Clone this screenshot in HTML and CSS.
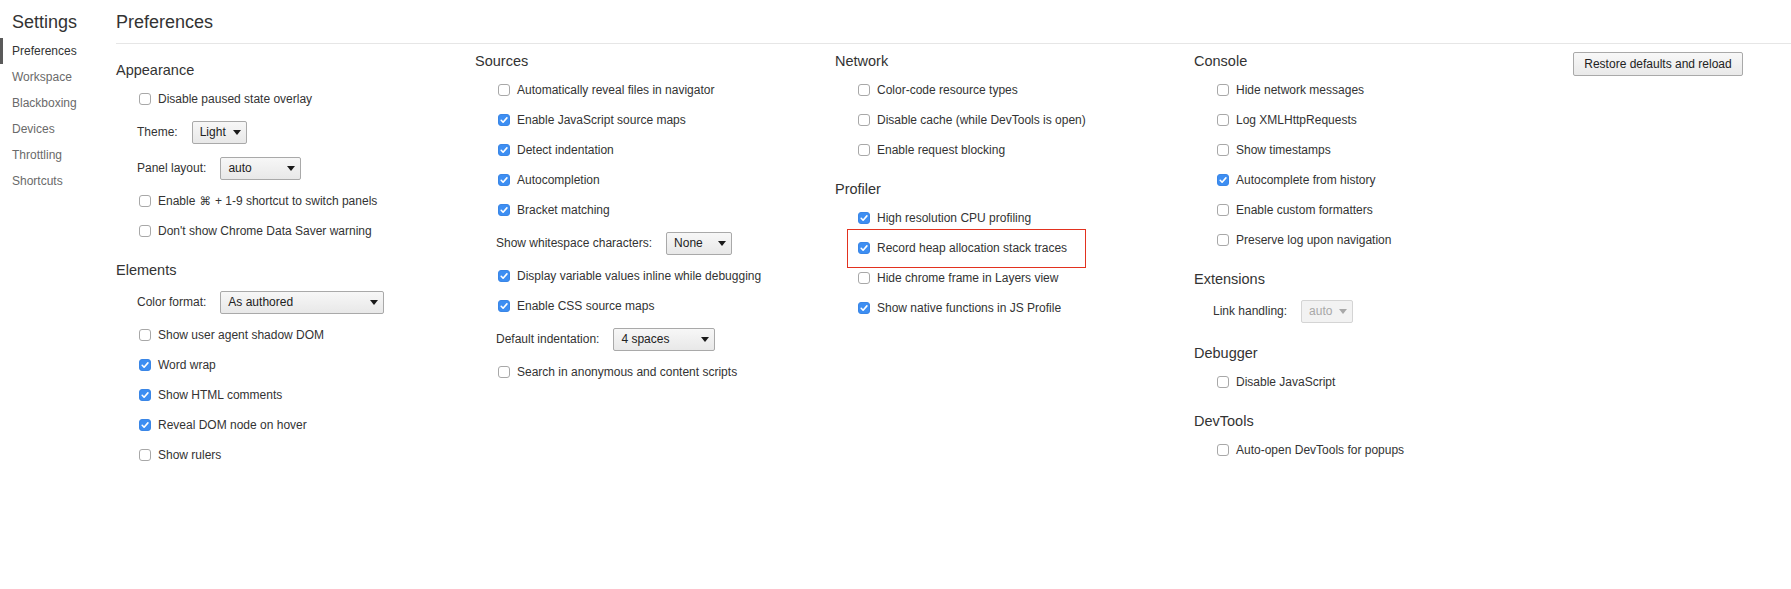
FILE: index.html
```html
<!DOCTYPE html>
<html>
<head>
<meta charset="utf-8">
<title>Settings</title>
<link rel="stylesheet" href="styles.css">
</head>
<body>
<div class="app">
  <aside class="sidebar">
    <div class="sidebar-title">Settings</div>
    <nav class="nav">
      <div class="nav-item active">Preferences</div>
      <div class="nav-item">Workspace</div>
      <div class="nav-item">Blackboxing</div>
      <div class="nav-item">Devices</div>
      <div class="nav-item">Throttling</div>
      <div class="nav-item">Shortcuts</div>
    </nav>
  </aside>
  <main class="main">
    <header class="main-title">Preferences</header>
    <div class="content">
      <div class="columns">
        <div class="column first">
          <section class="section">
            <h2 class="section-title">Appearance</h2>
            <label class="row"><span class="cb"></span>Disable paused state overlay</label>
            <div class="row select-row"><span class="select-label">Theme:</span><span class="select w-theme"><span>Light</span><i class="arrow"></i></span></div>
            <div class="row select-row"><span class="select-label">Panel layout:</span><span class="select w-panel"><span>auto</span><i class="arrow"></i></span></div>
            <label class="row"><span class="cb"></span>Enable <span class="cmd">⌘</span> + 1-9 shortcut to switch panels</label>
            <label class="row"><span class="cb"></span>Don't show Chrome Data Saver warning</label>
          </section>
          <section class="section">
            <h2 class="section-title">Elements</h2>
            <div class="row select-row"><span class="select-label">Color format:</span><span class="select w-color"><span>As authored</span><i class="arrow"></i></span></div>
            <label class="row"><span class="cb"></span>Show user agent shadow DOM</label>
            <label class="row"><span class="cb checked"><svg viewBox="0 0 12 12"><path d="M3.2 6.3 L5.1 8.2 L8.9 3.9"/></svg></span>Word wrap</label>
            <label class="row"><span class="cb checked"><svg viewBox="0 0 12 12"><path d="M3.2 6.3 L5.1 8.2 L8.9 3.9"/></svg></span>Show HTML comments</label>
            <label class="row"><span class="cb checked"><svg viewBox="0 0 12 12"><path d="M3.2 6.3 L5.1 8.2 L8.9 3.9"/></svg></span>Reveal DOM node on hover</label>
            <label class="row"><span class="cb"></span>Show rulers</label>
          </section>
        </div>
        <div class="column">
          <section class="section">
            <h2 class="section-title">Sources</h2>
            <label class="row"><span class="cb"></span>Automatically reveal files in navigator</label>
            <label class="row"><span class="cb checked"><svg viewBox="0 0 12 12"><path d="M3.2 6.3 L5.1 8.2 L8.9 3.9"/></svg></span>Enable JavaScript source maps</label>
            <label class="row"><span class="cb checked"><svg viewBox="0 0 12 12"><path d="M3.2 6.3 L5.1 8.2 L8.9 3.9"/></svg></span>Detect indentation</label>
            <label class="row"><span class="cb checked"><svg viewBox="0 0 12 12"><path d="M3.2 6.3 L5.1 8.2 L8.9 3.9"/></svg></span>Autocompletion</label>
            <label class="row"><span class="cb checked"><svg viewBox="0 0 12 12"><path d="M3.2 6.3 L5.1 8.2 L8.9 3.9"/></svg></span>Bracket matching</label>
            <div class="row select-row"><span class="select-label">Show whitespace characters:</span><span class="select w-ws"><span>None</span><i class="arrow"></i></span></div>
            <label class="row"><span class="cb checked"><svg viewBox="0 0 12 12"><path d="M3.2 6.3 L5.1 8.2 L8.9 3.9"/></svg></span>Display variable values inline while debugging</label>
            <label class="row"><span class="cb checked"><svg viewBox="0 0 12 12"><path d="M3.2 6.3 L5.1 8.2 L8.9 3.9"/></svg></span>Enable CSS source maps</label>
            <div class="row select-row"><span class="select-label">Default indentation:</span><span class="select w-indent"><span>4 spaces</span><i class="arrow"></i></span></div>
            <label class="row"><span class="cb"></span>Search in anonymous and content scripts</label>
          </section>
        </div>
        <div class="column">
          <section class="section">
            <h2 class="section-title">Network</h2>
            <label class="row"><span class="cb"></span>Color-code resource types</label>
            <label class="row"><span class="cb"></span>Disable cache (while DevTools is open)</label>
            <label class="row"><span class="cb"></span>Enable request blocking</label>
          </section>
          <section class="section">
            <h2 class="section-title">Profiler</h2>
            <label class="row"><span class="cb checked"><svg viewBox="0 0 12 12"><path d="M3.2 6.3 L5.1 8.2 L8.9 3.9"/></svg></span>High resolution CPU profiling</label>
            <label class="row highlight"><span class="cb checked"><svg viewBox="0 0 12 12"><path d="M3.2 6.3 L5.1 8.2 L8.9 3.9"/></svg></span>Record heap allocation stack traces</label>
            <label class="row"><span class="cb"></span>Hide chrome frame in Layers view</label>
            <label class="row"><span class="cb checked"><svg viewBox="0 0 12 12"><path d="M3.2 6.3 L5.1 8.2 L8.9 3.9"/></svg></span>Show native functions in JS Profile</label>
          </section>
        </div>
        <div class="column">
          <section class="section">
            <h2 class="section-title">Console</h2>
            <label class="row"><span class="cb"></span>Hide network messages</label>
            <label class="row"><span class="cb"></span>Log XMLHttpRequests</label>
            <label class="row"><span class="cb"></span>Show timestamps</label>
            <label class="row"><span class="cb checked"><svg viewBox="0 0 12 12"><path d="M3.2 6.3 L5.1 8.2 L8.9 3.9"/></svg></span>Autocomplete from history</label>
            <label class="row"><span class="cb"></span>Enable custom formatters</label>
            <label class="row"><span class="cb"></span>Preserve log upon navigation</label>
          </section>
          <section class="section">
            <h2 class="section-title">Extensions</h2>
            <div class="row select-row link-row"><span class="select-label">Link handling:</span><span class="select w-link disabled"><span>auto</span><i class="arrow"></i></span></div>
          </section>
          <section class="section">
            <h2 class="section-title">Debugger</h2>
            <label class="row"><span class="cb"></span>Disable JavaScript</label>
          </section>
          <section class="section">
            <h2 class="section-title">DevTools</h2>
            <label class="row"><span class="cb"></span>Auto-open DevTools for popups</label>
          </section>
        </div>
      </div>
      <div class="actions">
        <button class="btn">Restore defaults and reload</button>
      </div>
    </div>
  </main>
</div>
</body>
</html>
```

FILE: styles.css
```css
* { box-sizing: border-box; }

html, body {
  margin: 0;
  padding: 0;
  background: #ffffff;
}

body {
  font-family: "Liberation Sans", Arial, Helvetica, sans-serif;
  font-size: 12px;
  color: #333333;
}

.app {
  display: flex;
  min-height: 589px;
}

/* Sidebar */
.sidebar {
  width: 116px;
  flex: 0 0 116px;
}

.sidebar-title {
  padding: 10px 0 0 12px;
  font-size: 18px;
  line-height: 24px;
  color: #333333;
}

.nav {
  margin-top: 4px;
}

.nav-item {
  height: 26px;
  line-height: 26px;
  padding-left: 12px;
  color: #6a6a6a;
}

.nav-item.active {
  color: #333333;
  box-shadow: inset 3px 0 0 #5a5a5a;
}

/* Main */
.main {
  flex: 1;
  min-width: 0;
}

.main-title {
  height: 44px;
  padding-top: 10px;
  font-size: 18px;
  line-height: 24px;
  border-bottom: 1px solid #e6e6e6;
  color: #333333;
}

.content {
  display: flex;
  align-items: flex-start;
  padding-top: 7px;
}

.columns {
  display: grid;
  grid-template-columns: 359px 360px 359px 360px;
}

.column.first {
  padding-top: 9px;
}

.section + .section {
  margin-top: 14px;
}

.section-title {
  margin: 0 0 4px 0;
  font-size: 14.5px;
  font-weight: normal;
  line-height: 20px;
  color: #333333;
}

.row {
  display: flex;
  align-items: center;
  height: 30px;
  padding-left: 23px;
  white-space: nowrap;
}

.select-row {
  height: 36px;
  padding-left: 21px;
}

.link-row {
  padding-left: 19px;
}

.select-label {
  margin-right: 14px;
}

.cmd {
  font-family: "DejaVu Sans", sans-serif;
  font-size: 11.5px;
  margin: 0 4px 0 4px;
}

/* Checkbox */
.cb {
  flex: 0 0 12px;
  width: 12px;
  height: 12px;
  margin-right: 7px;
  border: 1px solid #a8a8a8;
  border-radius: 3px;
  background: #ffffff;
  position: relative;
}

.cb.checked {
  background: #3d8ef2;
  border-color: #3a86e6;
}

.cb svg {
  position: absolute;
  left: -1px;
  top: -1px;
  width: 12px;
  height: 12px;
}

.cb svg path {
  fill: none;
  stroke: #ffffff;
  stroke-width: 1.6;
  stroke-linecap: round;
  stroke-linejoin: round;
}

/* Select */
.select {
  display: flex;
  align-items: center;
  justify-content: space-between;
  height: 23px;
  padding: 0 5px 0 7px;
  border: 1px solid #a9a9a9;
  border-radius: 2px;
  background: linear-gradient(#f7f7f7, #e8e8e8);
  color: #222222;
}

.select.disabled {
  border-color: #d4d4d4;
  background: #f2f2f2;
  color: #a8a8a8;
}

.arrow {
  width: 0;
  height: 0;
  border-left: 4px solid transparent;
  border-right: 4px solid transparent;
  border-top: 5px solid #1a1a1a;
}

.select.disabled .arrow {
  border-top-color: #a8a8a8;
}

.w-theme { width: 55px; }
.w-panel { width: 81px; }
.w-color { width: 164px; }
.w-ws { width: 66px; }
.w-indent { width: 102px; }
.w-link { width: 52px; }

/* Highlight annotation */
.highlight {
  position: relative;
}

.highlight::after {
  content: "";
  position: absolute;
  left: 12px;
  top: -4px;
  width: 237px;
  height: 37px;
  border: 1px solid #e2321f;
  pointer-events: none;
}

/* Actions */
.actions {
  padding-left: 19px;
  padding-top: 1px;
}

.btn {
  width: 170px;
  height: 24px;
  padding: 0;
  font-family: "Liberation Sans", Arial, Helvetica, sans-serif;
  font-size: 12px;
  color: #222222;
  border: 1px solid #a9a9a9;
  border-radius: 2px;
  background: linear-gradient(#f8f8f8, #e9e9e9);
}
```
